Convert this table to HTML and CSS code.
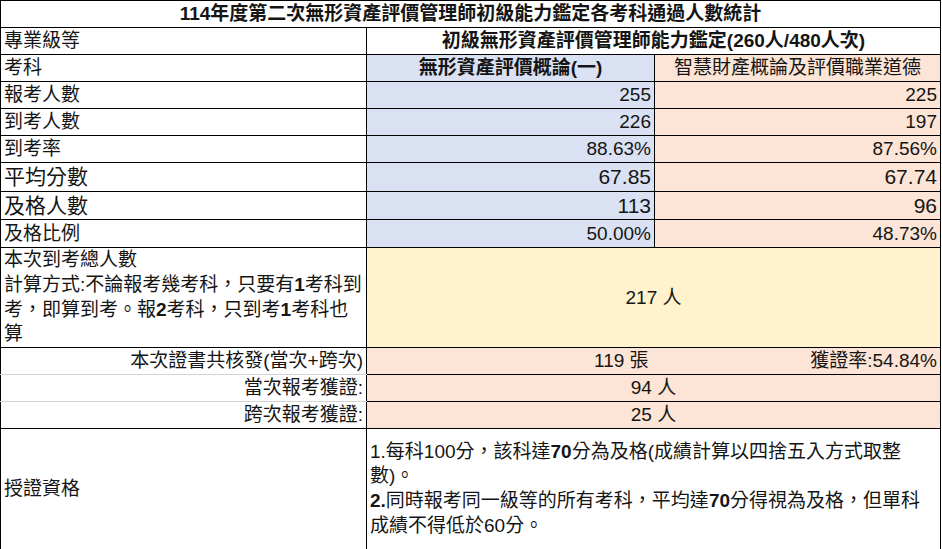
FILE: index.html
```html
<!DOCTYPE html>
<html lang="zh-Hant">
<head>
<meta charset="utf-8">
<title>114年度第二次無形資產評價管理師初級能力鑑定各考科通過人數統計</title>
<link rel="stylesheet" href="styles.css">
</head>
<body>
<table class="sheet">
  <colgroup>
    <col class="col-a">
    <col class="col-b">
    <col class="col-c">
  </colgroup>
  <tr class="h27">
    <td colspan="3" class="title">114年度第二次無形資產評價管理師初級能力鑑定各考科通過人數統計</td>
  </tr>
  <tr class="h27">
    <td>專業級等</td>
    <td colspan="2" class="center bold">初級無形資產評價管理師能力鑑定(260人/480人次)</td>
  </tr>
  <tr class="h27">
    <td>考科</td>
    <td class="blue center bold">無形資產評價概論(一)</td>
    <td class="peach center">智慧財產概論及評價職業道德</td>
  </tr>
  <tr class="h27">
    <td>報考人數</td>
    <td class="blue num">255</td>
    <td class="peach num">225</td>
  </tr>
  <tr class="h27">
    <td>到考人數</td>
    <td class="blue num">226</td>
    <td class="peach num">197</td>
  </tr>
  <tr class="h27">
    <td>到考率</td>
    <td class="blue num">88.63%</td>
    <td class="peach num">87.56%</td>
  </tr>
  <tr class="h29 big">
    <td>平均分數</td>
    <td class="blue num">67.85</td>
    <td class="peach num">67.74</td>
  </tr>
  <tr class="h28 big">
    <td>及格人數</td>
    <td class="blue num">113</td>
    <td class="peach num">96</td>
  </tr>
  <tr class="h28">
    <td>及格比例</td>
    <td class="blue num">50.00%</td>
    <td class="peach num">48.73%</td>
  </tr>
  <tr class="h99">
    <td class="multi top">本次到考總人數<br>計算方式:不論報考幾考科，只要有<b>1</b>考科到<br>考，即算到考。報<b>2</b>考科，只到考<b>1</b>考科也<br>算</td>
    <td colspan="2" class="yellow center">217 人</td>
  </tr>
  <tr class="h27">
    <td class="right gray-bottom">本次證書共核發(當次+跨次)</td>
    <td colspan="2" class="peach">
      <div class="split"><span class="count">119 張</span><span>獲證率:54.84%</span></div>
    </td>
  </tr>
  <tr class="h27">
    <td class="right gray-top gray-bottom">當次報考獲證:</td>
    <td colspan="2" class="peach center">94 人</td>
  </tr>
  <tr class="h27">
    <td class="right gray-top">跨次報考獲證:</td>
    <td colspan="2" class="peach center">25 人</td>
  </tr>
  <tr class="h121">
    <td>授證資格</td>
    <td colspan="2" class="multi">1.每科100分，該科達<b>70</b>分為及格(成績計算以四捨五入方式取整<br>數)。<br><b>2.</b>同時報考同一級等的所有考科，平均達<b>70</b>分得視為及格，但單科<br>成績不得低於60分。</td>
  </tr>
</table>
</body>
</html>
```

FILE: styles.css
```css
html, body {
  margin: 0;
  padding: 0;
  background: #ffffff;
}

body {
  font-family: "Liberation Sans", "Noto Sans CJK TC", sans-serif;
  color: #151515;
}

.sheet {
  border-collapse: collapse;
  table-layout: fixed;
  width: 940px;
  font-size: 19px;
}

.col-a { width: 366px; }
.col-b { width: 288px; }
.col-c { width: 286px; }

.sheet td {
  border: 1px solid #000;
  padding: 0 3px;
  line-height: 22px;
  vertical-align: middle;
  white-space: nowrap;
  overflow: hidden;
}

.h27 { height: 27px; }
.h28 { height: 28px; }
.h29 { height: 29px; }
.h99 { height: 99px; }
.h121 { height: 121px; }

.big td { font-size: 21px; }

.title {
  text-align: center;
  font-weight: bold;
}

.center { text-align: center; }
.right { text-align: right; }
.num { text-align: right; }
.bold { font-weight: bold; }

.blue { background: #d9e1f2; }
.peach { background: #fce4d6; }
.yellow { background: #fff2cc; }

.sheet td.multi {
  line-height: 24.8px;
}

.sheet td.top {
  vertical-align: top;
}

.multi b { font-weight: bold; }

.sheet td.gray-bottom { border-bottom-color: #d4d4d4; }
.sheet td.gray-top { border-top-color: #d4d4d4; }

.split {
  display: flex;
  justify-content: space-between;
}

.count {
  margin-left: 224px;
}
```
